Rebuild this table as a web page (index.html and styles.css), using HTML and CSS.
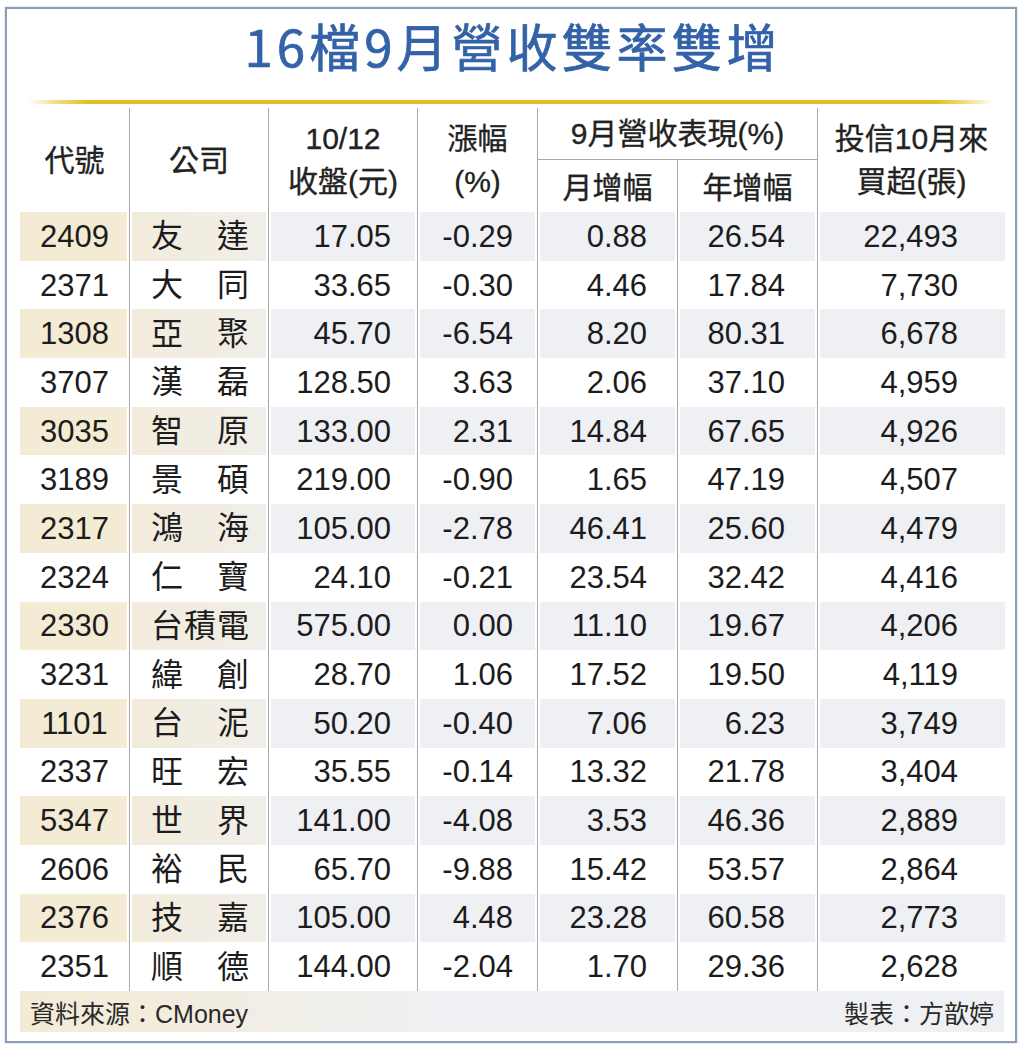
FILE: index.html
```html
<!DOCTYPE html>
<html lang="zh-Hant">
<head>
<meta charset="utf-8">
<title>16檔9月營收雙率雙增</title>
<link rel="stylesheet" href="styles.css">
</head>
<body>
<div class="frame">
  <h1 class="title">16檔9月營收雙率雙增</h1>
  <div class="rule"></div>
  <table class="tbl">
    <colgroup>
      <col class="w1"><col class="w2"><col class="w3"><col class="w4"><col class="w5"><col class="w6"><col class="w7">
    </colgroup>
    <thead>
      <tr class="ha">
        <th rowspan="2" class="first">代號</th>
        <th rowspan="2">公司</th>
        <th rowspan="2" class="two">10/12<br>收盤(元)</th>
        <th rowspan="2" class="two">漲幅<br>(%)</th>
        <th colspan="2" class="grp">9月營收表現(%)</th>
        <th rowspan="2" class="two">投信10月來<br>買超(張)</th>
      </tr>
      <tr class="hb">
        <th class="sub">月增幅</th>
        <th class="sub">年增幅</th>
      </tr>
    </thead>
    <tbody>
      <tr><td>2409</td><td><div class="co"><span>友</span><span>達</span></div></td><td>17.05</td><td>-0.29</td><td>0.88</td><td>26.54</td><td>22,493</td></tr>
      <tr><td>2371</td><td><div class="co"><span>大</span><span>同</span></div></td><td>33.65</td><td>-0.30</td><td>4.46</td><td>17.84</td><td>7,730</td></tr>
      <tr><td>1308</td><td><div class="co"><span>亞</span><span>聚</span></div></td><td>45.70</td><td>-6.54</td><td>8.20</td><td>80.31</td><td>6,678</td></tr>
      <tr><td>3707</td><td><div class="co"><span>漢</span><span>磊</span></div></td><td>128.50</td><td>3.63</td><td>2.06</td><td>37.10</td><td>4,959</td></tr>
      <tr><td>3035</td><td><div class="co"><span>智</span><span>原</span></div></td><td>133.00</td><td>2.31</td><td>14.84</td><td>67.65</td><td>4,926</td></tr>
      <tr><td>3189</td><td><div class="co"><span>景</span><span>碩</span></div></td><td>219.00</td><td>-0.90</td><td>1.65</td><td>47.19</td><td>4,507</td></tr>
      <tr><td>2317</td><td><div class="co"><span>鴻</span><span>海</span></div></td><td>105.00</td><td>-2.78</td><td>46.41</td><td>25.60</td><td>4,479</td></tr>
      <tr><td>2324</td><td><div class="co"><span>仁</span><span>寶</span></div></td><td>24.10</td><td>-0.21</td><td>23.54</td><td>32.42</td><td>4,416</td></tr>
      <tr><td>2330</td><td><div class="co"><span>台</span><span>積</span><span>電</span></div></td><td>575.00</td><td>0.00</td><td>11.10</td><td>19.67</td><td>4,206</td></tr>
      <tr><td>3231</td><td><div class="co"><span>緯</span><span>創</span></div></td><td>28.70</td><td>1.06</td><td>17.52</td><td>19.50</td><td>4,119</td></tr>
      <tr><td>1101</td><td><div class="co"><span>台</span><span>泥</span></div></td><td>50.20</td><td>-0.40</td><td>7.06</td><td>6.23</td><td>3,749</td></tr>
      <tr><td>2337</td><td><div class="co"><span>旺</span><span>宏</span></div></td><td>35.55</td><td>-0.14</td><td>13.32</td><td>21.78</td><td>3,404</td></tr>
      <tr><td>5347</td><td><div class="co"><span>世</span><span>界</span></div></td><td>141.00</td><td>-4.08</td><td>3.53</td><td>46.36</td><td>2,889</td></tr>
      <tr><td>2606</td><td><div class="co"><span>裕</span><span>民</span></div></td><td>65.70</td><td>-9.88</td><td>15.42</td><td>53.57</td><td>2,864</td></tr>
      <tr><td>2376</td><td><div class="co"><span>技</span><span>嘉</span></div></td><td>105.00</td><td>4.48</td><td>23.28</td><td>60.58</td><td>2,773</td></tr>
      <tr><td>2351</td><td><div class="co"><span>順</span><span>德</span></div></td><td>144.00</td><td>-2.04</td><td>1.70</td><td>29.36</td><td>2,628</td></tr>
    </tbody>
  </table>
  <div class="foot"><span>資料來源：CMoney</span><span>製表：方歆婷</span></div>
</div>
</body>
</html>
```

FILE: styles.css
```css
html, body {
  margin: 0;
  padding: 0;
  background: #ffffff;
}

body {
  width: 1024px;
  height: 1047px;
  overflow: hidden;
  font-family: "Liberation Sans", "Noto Sans CJK TC", sans-serif;
  color: #1c1c1c;
}

.frame {
  box-sizing: border-box;
  width: 1012px;
  height: 1036px;
  margin: 7px 7px 0 5px;
  border: 2px solid #8d9cb8;
  box-shadow: 0 0 2px rgba(80, 90, 110, 0.35);
  padding: 0 0 9px 0;
  display: flex;
  flex-direction: column;
}

.title {
  margin: 0;
  height: 91px;
  box-sizing: border-box;
  padding: 0 0 19px 4px;
  line-height: 72px;
  text-align: center;
  font-family: "Noto Sans CJK TC", "Liberation Sans", sans-serif;
  font-size: 51px;
  font-weight: 400;
  -webkit-text-stroke: 0.7px #3362a8;
  letter-spacing: 4px;
  color: #3362a8;
}

.rule {
  height: 4px;
  margin: 0 21px 0 21px;
  background: linear-gradient(90deg,
    rgba(232, 194, 40, 0) 0,
    rgba(232, 194, 40, 0.6) 30px,
    #e4bd22 60px,
    #e4bd22 calc(100% - 60px),
    rgba(232, 194, 40, 0.6) calc(100% - 30px),
    rgba(232, 194, 40, 0) 100%);
}

.tbl {
  margin: 4px 11px 0 13px;
  width: 985px;
  table-layout: fixed;
  border-collapse: separate;
  border-spacing: 0;
}

.w1 { width: 109px; }
.w2 { width: 139px; }
.w3 { width: 149px; }
.w4 { width: 120px; }
.w5 { width: 140px; }
.w6 { width: 140px; }
.w7 { width: 188px; }

th {
  font-weight: 400;
  -webkit-text-stroke: 0.35px #222;
  font-size: 30px;
  color: #222;
  text-align: center;
  vertical-align: middle;
  padding: 0;
  border-left: 1px solid #a9a9a9;
  line-height: 43px;
}

th.first {
  border-left: none;
}

.ha {
  height: 52px;
}

.hb {
  height: 52px;
}

th.grp {
  border-bottom: 1px solid #a9a9a9;
  line-height: 40px;
}

th.sub {
  padding-top: 2px;
}

td {
  padding: 0;
  height: 48.7px;
  font-size: 31px;
  text-align: right;
  vertical-align: middle;
  border-left: 1px solid #a9a9a9;
  box-shadow: inset 2px 0 0 #fff, inset -2px 0 0 #fff;
  line-height: 1;
}

td:first-child {
  border-left: none;
  text-align: center;
  box-shadow: inset -2px 0 0 #fff;
}

td:last-child {
  box-shadow: inset 2px 0 0 #fff;
}

td:nth-child(3) { padding-right: 26px; }
td:nth-child(4) { padding-right: 24px; }
td:nth-child(5) { padding-right: 30px; }
td:nth-child(6) { padding-right: 32px; }
td:nth-child(7) { padding-right: 47px; }

tbody tr:nth-child(odd) td {
  background: #eef0f3;
}

tbody tr:nth-child(odd) td:first-child {
  background: #f4ebd4;
}

tbody tr:nth-child(odd) td:nth-child(2) {
  background: linear-gradient(90deg, #f3ecdc 0, #f0eee9 100%);
}

.co {
  display: flex;
  justify-content: space-between;
  padding: 0 19px 6px 21px;
  font-family: "Noto Sans CJK TC", sans-serif;
  font-size: 32px;
  line-height: 1;
}

.foot {
  height: 41px;
  margin: 0 11px 0 13px;
  padding: 0 10px;
  display: flex;
  align-items: center;
  justify-content: space-between;
  font-family: "Liberation Sans", "Noto Sans CJK TC", sans-serif;
  font-size: 25px;
  color: #2a2a2a;
  background: linear-gradient(90deg, #f4ebd5 0, #f2ede2 200px, #eef0f3 420px, #eef0f3 100%);
}
```
